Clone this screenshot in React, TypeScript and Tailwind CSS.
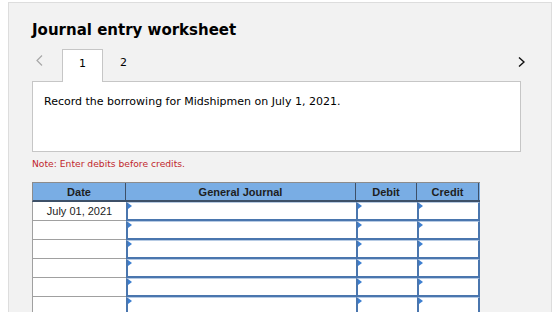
const rows = ["July 01, 2021", "", "", "", "", "", ""];

function InputCell({ w, last }: { w: string; last?: boolean }) {
  return (
    <div
      className={`relative h-[19px] border-l-2 border-b-2 border-t border-t-[#b7cbe4] border-b-[#4a76ae] border-l-[#4a76ae] bg-white ${w} ${last ? "border-r-2 border-r-[#4a76ae]" : ""}`}
    >
      <div className="absolute left-0 top-0 h-0 w-0 border-y-[3px] border-l-[4px] border-y-transparent border-l-[#3d7fd0]" />
    </div>
  );
}

export default function App() {
  return (
    <div className="h-[312px] w-[560px] overflow-hidden bg-white font-['DejaVu_Sans',sans-serif]">
      <div className="ml-[8px] mt-[2px] h-[340px] w-[544px] border border-[#dddddd] bg-[#f2f2f2] pl-[23px]">
        <div className="pt-[16px] text-[15px] font-bold text-black">Journal entry worksheet</div>

        {/* Tabs */}
        <div className="mt-[7px] flex h-[32px] items-start pr-[26px]">
          <div className="w-[30px] pl-[4px] pt-[6px]">
            <svg width="7" height="11" viewBox="0 0 7 11" fill="none">
              <path d="M6 0.5 L1 5.5 L6 10.5" stroke="#a8a8a8" strokeWidth="1.2" />
            </svg>
          </div>
          <div className="relative z-10 flex h-[33px] w-[41px] justify-center border border-b-0 border-[#c6c6c6] bg-white pt-[6px] text-[11px]">
            1
          </div>
          <div className="ml-[17px] pt-[6px] text-[11px]">2</div>
          <div className="flex-1" />
          <div className="pt-[8px]">
            <svg width="7" height="10" viewBox="0 0 7 10" fill="none">
              <path d="M1 0.5 L6 5 L1 9.5" stroke="#111" strokeWidth="1.4" />
            </svg>
          </div>
        </div>

        {/* Question box */}
        <div className="h-[71px] w-[489px] border border-[#c6c6c6] bg-white px-[11px] pt-[12px] text-[11px] text-black">
          Record the borrowing for Midshipmen on July 1, 2021.
        </div>

        <div className="mt-[5px] text-[9.2px] text-[#c1272d]">Note: Enter debits before credits.</div>

        {/* Table */}
        <div className="mt-[12px] w-[448px] font-['Liberation_Sans',Arial,sans-serif]">
          <div className="flex h-[20px] border-t border-l border-[#8c8c8c] border-b-2 border-b-[#3d5068] bg-[#79ade4] text-[11px] font-bold text-[#1e1e1e]">
            <div className="flex w-[93px] items-center justify-center border-r border-[#3d5068]">Date</div>
            <div className="flex w-[230px] items-center justify-center border-r border-[#3d5068]">General Journal</div>
            <div className="flex w-[61px] items-center justify-center border-r border-[#3d5068]">Debit</div>
            <div className="flex w-[62px] items-center justify-center border-r border-[#3d5068]">Credit</div>
          </div>
          {rows.map((d, i) => (
            <div key={i} className="flex">
              <div className="flex h-[19px] w-[94px] items-center justify-center border-b border-l border-[#a0a0a0] bg-white text-[11px] text-[#222]">
                {d}
              </div>
              <InputCell w="w-[230px]" />
              <InputCell w="w-[61px]" />
              <InputCell w="w-[63px]" last />
            </div>
          ))}
        </div>
      </div>
    </div>
  );
}
